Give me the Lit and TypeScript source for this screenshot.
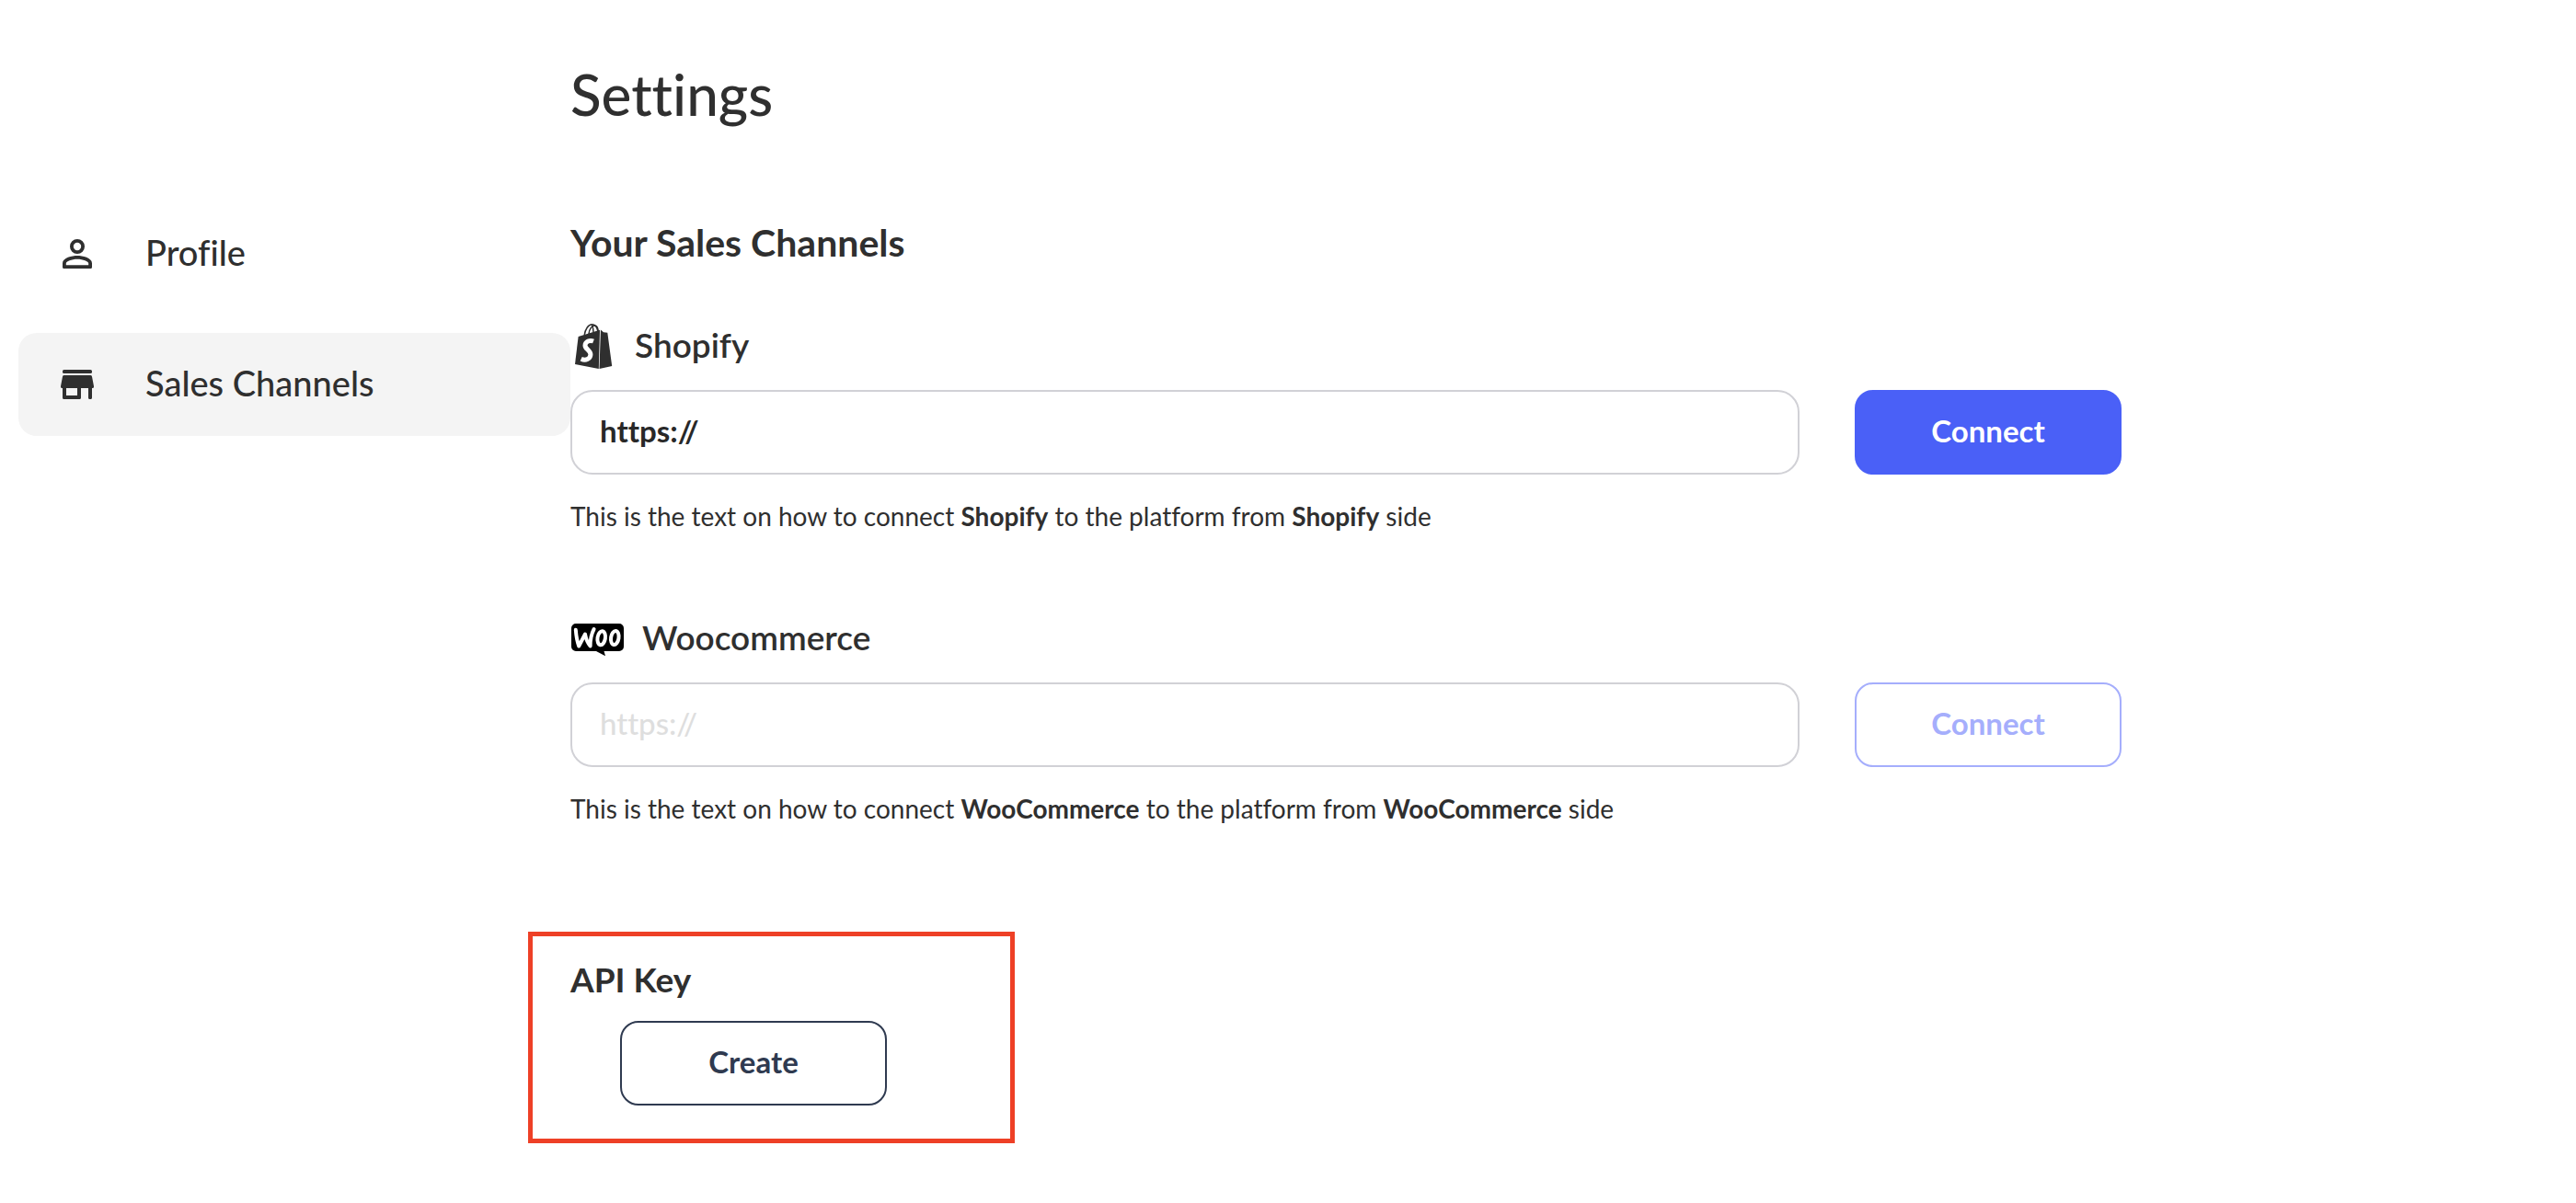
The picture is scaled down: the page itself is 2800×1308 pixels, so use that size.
import { LitElement, html, css, svg, type TemplateResult } from "lit";
import { customElement } from "lit/decorators.js";

const profileIcon = svg`
  <path fill-rule="evenodd" d="M12 4a4 4 0 1 0 0 8 4 4 0 0 0 0-8zm0 1.900a2.100 2.100 0 1 1 0 4.200 2.100 2.100 0 0 1 0-4.200z"/>
  <path fill-rule="evenodd" d="M12 13c-2.800 0-8 1.100-8 4.100v2.100a.8.8 0 0 0 .8.8h14.400a.8.8 0 0 0 .8-.8v-2.100c0-3-5.200-4.100-8-4.100zm6.100 5.100H5.900v-.9c0-1 3-2.300 6.100-2.300s6.100 1.300 6.100 2.300z"/>`;

const storeIcon = svg`
  <rect x="4" y="4" width="16" height="2" rx=".8"/>
  <path fill-rule="evenodd" d="M4.900 7h14.200a.9.9 0 0 1 .9.700l1 5.300a.8.8 0 0 1-.8 1H20v5.200a.8.8 0 0 1-.8.8h-.4a.8.8 0 0 1-.8-.8V14h-4v5.200a.8.8 0 0 1-.8.8H4.800a.8.8 0 0 1-.8-.8V14h-.2a.8.8 0 0 1-.8-1L4 7.700A.9.9 0 0 1 4.900 7zM6 14v4h6v-4z"/>`;

const bagLogo = html`
  <svg class="bag" viewBox="0 0 50 56" aria-hidden="true">
    <g transform="translate(5 6)">
      <g fill="none" stroke="#2f2f2f" stroke-width="1.500">
        <path d="M10.200 12.500C11 6 14.500.800 18.500.800c3.200 0 5.500 3 6.500 7.500"/>
        <path d="M15 11C15.600 5.500 18.500 1.800 21.500 2c2 .2 3.400 2.200 3.700 6"/>
        <path d="M20 9.500c0-3.200-.4-5.700-1.600-8.200"/>
      </g>
      <path fill="#2f2f2f" d="M3.600 14 27 6.800 25.800 49 0 44z"/>
      <path fill="#2f2f2f" d="M27.900 6.500 31 9.300l4.300.4L40.200 46l-13.700 3z"/>
      <path fill="none" stroke="#fff" stroke-width="5" d="M20 19c-3.800-1.500-8.800.2-9 4.500-.2 4.200 6.200 5.300 5.900 10.200-.3 4.600-5.200 6.900-10.200 4.600"/>
    </g>
  </svg>`;

const bubbleLogo = html`
  <svg class="bubble" viewBox="0 0 58 44" aria-hidden="true">
    <g transform="translate(1 8)">
      <path fill="#000" d="M5 0h47a5 5 0 0 1 5 5v20a5 5 0 0 1-5 5H35.500l1.500 5.300L27 30H5a5 5 0 0 1-5-5V5a5 5 0 0 1 5-5z"/>
      <g fill="none" stroke="#fff" stroke-width="4" stroke-linecap="round" stroke-linejoin="round">
        <path d="M4.800 6.800c.5 6.500 1.500 12.500 3.400 17.700L15 11.500c1 5.500 2.600 9.500 5.600 13C20.500 17.500 22 11 24.600 6"/>
        <ellipse cx="32.700" cy="15.700" rx="4.200" ry="7.600" transform="rotate(9 32.700 15.700)"/>
        <ellipse cx="47.300" cy="15.500" rx="4.200" ry="7.600" transform="rotate(9 47.300 15.500)"/>
      </g>
    </g>
  </svg>`;

interface Channel {
  id: string;
  title: string;
  brand: string;
  logo: TemplateResult;
  connected: boolean;
}

const channels: Channel[] = [
  { id: "shopify", title: "Shopify", brand: "Shopify", logo: bagLogo, connected: true },
  { id: "woo", title: "Woocommerce", brand: "WooCommerce", logo: bubbleLogo, connected: false },
];

@customElement("app-root")
export class AppRoot extends LitElement {
  static styles = css`
    :host {
      display: block;
      font-family: Lato, "Liberation Sans", sans-serif;
      font-variant-ligatures: none;
      color: #2f2f2f;
    }
    * { box-sizing: border-box; }
    h1, h2, h3, p { margin: 0; }
    .page {
      display: grid;
      grid-template-columns: 600px minmax(0, 1fr);
      min-height: 100vh;
      padding: 0 20px 60px;
      background: #fff;
    }
    .nav {
      display: flex;
      flex-direction: column;
      gap: 30px;
      padding-top: 220px;
    }
    .link {
      display: flex;
      align-items: center;
      gap: 50px;
      height: 112px;
      padding: 0 40px;
      border-radius: 20px;
      color: inherit;
      font-size: 38px;
      line-height: 44px;
      font-weight: 500;
      text-decoration: none;
    }
    .link span { padding-bottom: 4px; }
    .link svg { width: 48px; height: 48px; fill: currentColor; }
    .active { background: #f4f4f4; }
    .main { max-width: 1686px; padding-top: 66px; }
    h1 { font-size: 62px; line-height: 72px; font-weight: 500; }
    h2 { margin-top: 102px; font-size: 41px; line-height: 48px; font-weight: 700; }
    .channel { margin-top: 54px; }
    .channel + .channel { margin-top: 81px; }
    .label {
      display: flex;
      align-items: center;
      gap: 20px;
      height: 64px;
      margin-bottom: 18px;
      font-size: 37px;
      font-weight: 600;
    }
    .bag { width: 50px; height: 56px; }
    .bubble { width: 58px; height: 44px; }
    .row {
      display: grid;
      grid-template-columns: minmax(0, 1fr) 290px;
      gap: 60px;
    }
    .field {
      width: 100%;
      height: 92px;
      padding: 0 30px 4px;
      border: 2px solid #d1d1d6;
      border-radius: 24px;
      background: #fff;
      color: #282828;
      font: 700 33px Lato, "Liberation Sans", sans-serif;
      font-variant-ligatures: none;
      outline: none;
    }
    .field::placeholder { color: #dedede; font-weight: 500; opacity: 1; }
    .button {
      width: 290px;
      height: 92px;
      padding: 0 0 4px;
      border: 2px solid currentColor;
      border-radius: 20px;
      background: #fff;
      font: 700 33px Lato, "Liberation Sans", sans-serif;
    }
    .primary { border-color: #4a60f7; background: #4a60f7; color: #fff; }
    .muted { color: #a5aefc; }
    .dark { display: block; margin: 21px 0 0 54px; color: #2f3a50; }
    .help { margin-top: 27px; font-size: 28px; line-height: 36px; }
    .help b { font-weight: 700; }
    .api {
      width: 529px;
      margin: 116px 0 0 -46px;
      padding: 23px 41px 36px;
      border: 5px solid #ee4026;
    }
    h3 { font-size: 37px; line-height: 48px; font-weight: 700; }
  `;

  private renderChannel(c: Channel) {
    return html`
      <section class="channel">
        <label class="label" for=${c.id}>${c.logo}${c.title}</label>
        <div class="row">
          <input class="field" id=${c.id} type="text" placeholder="https://" .value=${c.connected ? "https://" : ""} />
          <button class="button ${c.connected ? "primary" : "muted"}" type="button" ?disabled=${!c.connected}>Connect</button>
        </div>
        <p class="help">This is the text on how to connect <b>${c.brand}</b> to the platform from <b>${c.brand}</b> side</p>
      </section>`;
  }

  render() {
    return html`
      <div class="page">
        <nav class="nav" aria-label="Settings">
          <a class="link" href="#profile"><svg viewBox="0 0 24 24" aria-hidden="true">${profileIcon}</svg><span>Profile</span></a>
          <a class="link active" href="#channels" aria-current="page"><svg viewBox="0 0 24 24" aria-hidden="true">${storeIcon}</svg><span>Sales Channels</span></a>
        </nav>
        <main class="main">
          <h1>Settings</h1>
          <h2>Your Sales Channels</h2>
          ${channels.map((c) => this.renderChannel(c))}
          <section class="api">
            <h3>API Key</h3>
            <button class="button dark" type="button">Create</button>
          </section>
        </main>
      </div>`;
  }
}
